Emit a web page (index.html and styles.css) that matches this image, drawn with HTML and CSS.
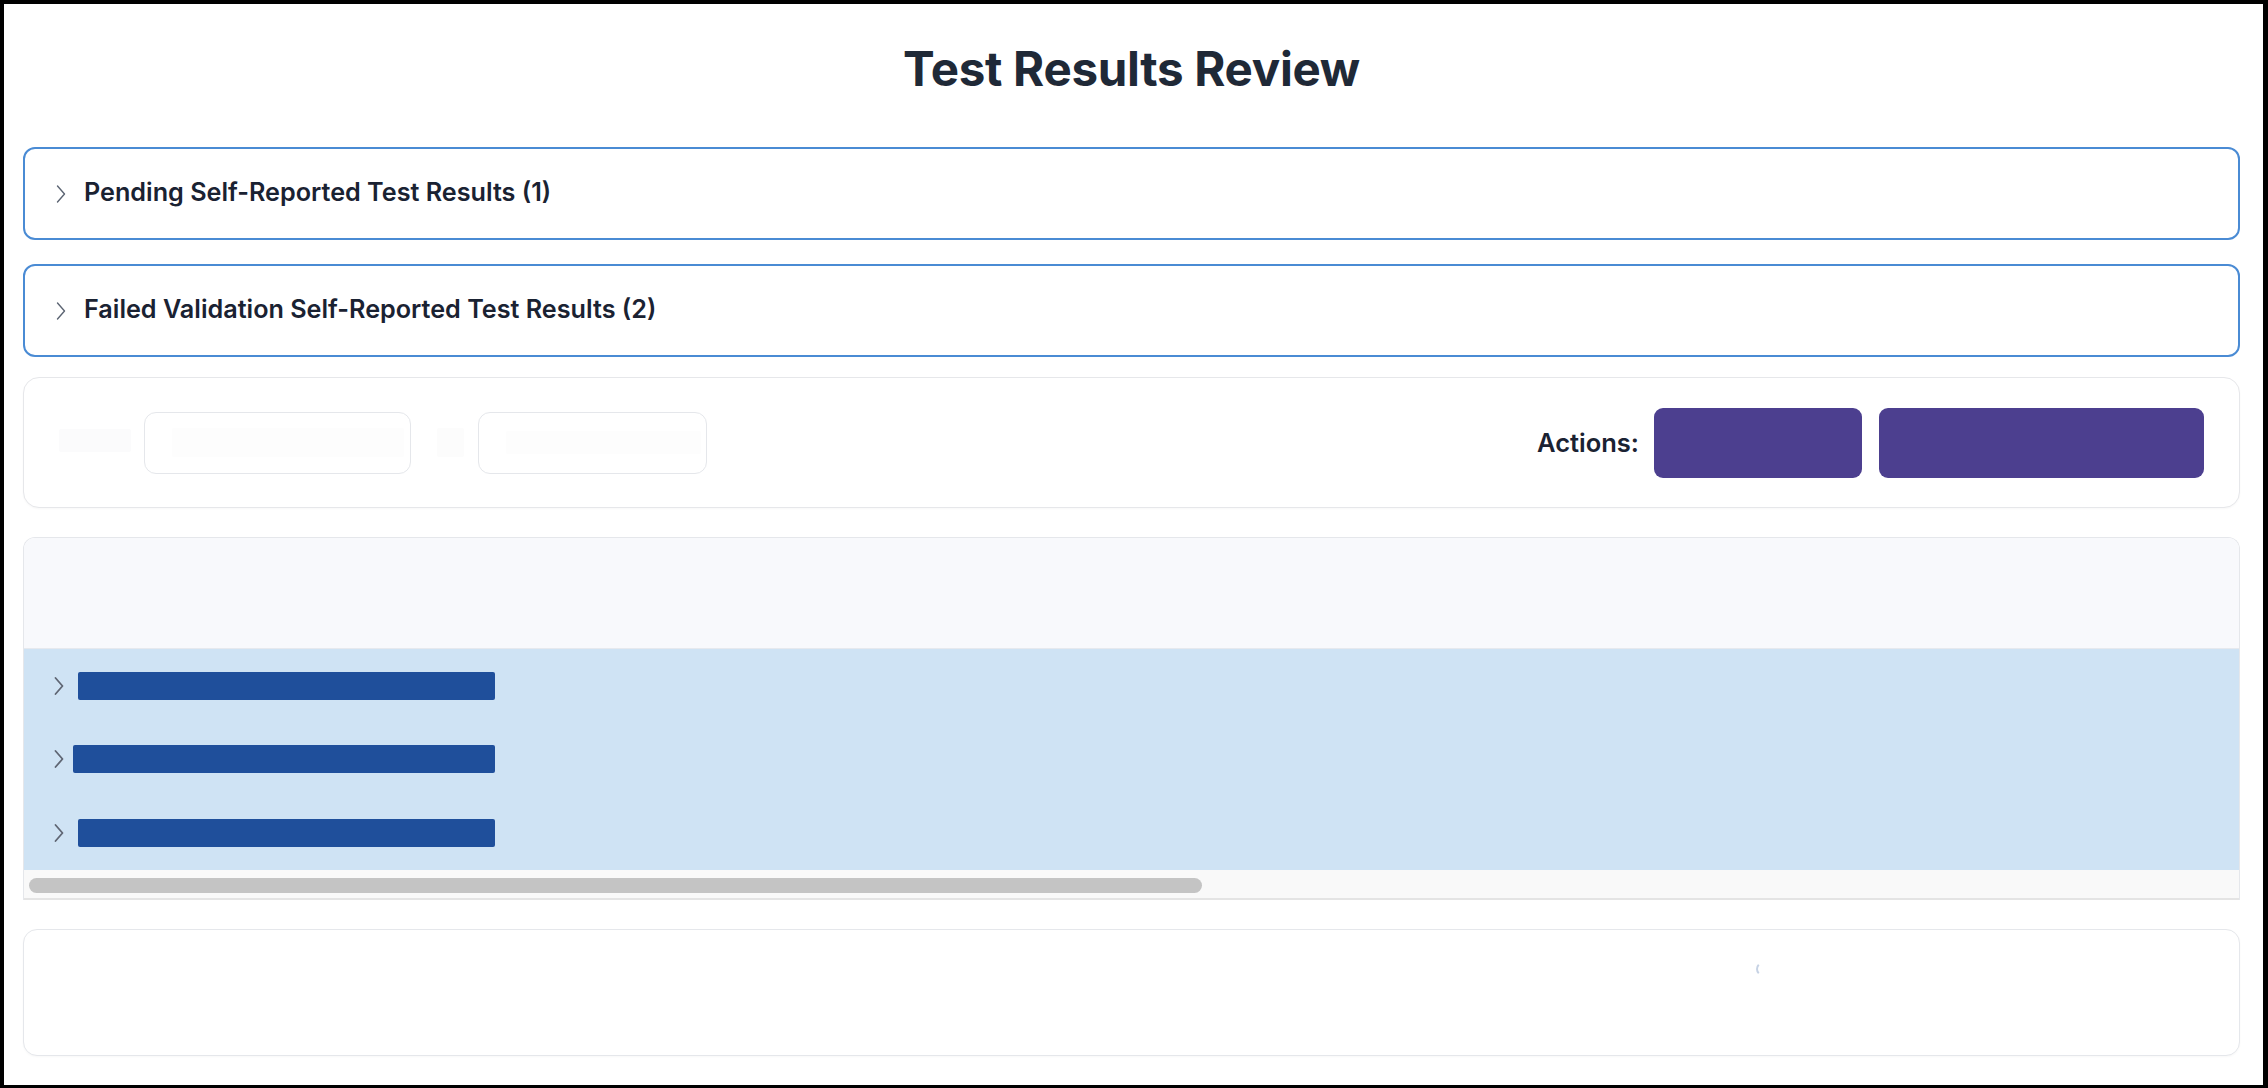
FILE: index.html
```html
<!DOCTYPE html>
<html lang="en">
<head>
<meta charset="utf-8">
<title>Test Results Review</title>
<link rel="stylesheet" href="styles.css">
</head>
<body>
<div class="frame">
  <main class="page">
    <h1 class="title">Test Results Review</h1>

    <section class="accordion">
      <button class="acc-head" type="button">
        <svg class="acc-chevron" width="12" height="20" viewBox="0 0 12 20" aria-hidden="true"><polyline points="2.5,2 9.5,10 2.5,18" fill="none" stroke="#5b6472" stroke-width="1.4" stroke-linecap="round" stroke-linejoin="round"/></svg>
        <span class="acc-title">Pending Self-Reported Test Results (1)</span>
      </button>
    </section>

    <section class="accordion accordion-second">
      <button class="acc-head" type="button">
        <svg class="acc-chevron" width="12" height="20" viewBox="0 0 12 20" aria-hidden="true"><polyline points="2.5,2 9.5,10 2.5,18" fill="none" stroke="#5b6472" stroke-width="1.4" stroke-linecap="round" stroke-linejoin="round"/></svg>
        <span class="acc-title">Failed Validation Self-Reported Test Results (2)</span>
      </button>
    </section>

    <section class="toolbar">
      <div class="filters">
        <span class="ghost ghost-label"></span>
        <div class="input input-wide"><span class="ghost ghost-text"></span></div>
        <span class="ghost ghost-sep"></span>
        <div class="input input-narrow"><span class="ghost ghost-text ghost-text-short"></span></div>
      </div>
      <div class="actions">
        <span class="actions-label">Actions:</span>
        <button class="btn btn-first" type="button"></button>
        <button class="btn btn-second" type="button"></button>
      </div>
    </section>

    <section class="table-card">
      <div class="thead"></div>
      <div class="tbody">
        <div class="row">
          <svg class="row-chevron" width="12" height="20" viewBox="0 0 12 20" aria-hidden="true"><polyline points="2.5,2 9.5,10 2.5,18" fill="none" stroke="#5f6673" stroke-width="1.8" stroke-linecap="round" stroke-linejoin="round"/></svg>
          <span class="bar"></span>
        </div>
        <div class="row">
          <svg class="row-chevron" width="12" height="20" viewBox="0 0 12 20" aria-hidden="true"><polyline points="2.5,2 9.5,10 2.5,18" fill="none" stroke="#5f6673" stroke-width="1.8" stroke-linecap="round" stroke-linejoin="round"/></svg>
          <span class="bar bar-wide"></span>
        </div>
        <div class="row">
          <svg class="row-chevron" width="12" height="20" viewBox="0 0 12 20" aria-hidden="true"><polyline points="2.5,2 9.5,10 2.5,18" fill="none" stroke="#5f6673" stroke-width="1.8" stroke-linecap="round" stroke-linejoin="round"/></svg>
          <span class="bar"></span>
        </div>
      </div>
      <div class="hscroll"><div class="thumb"></div></div>
    </section>

    <section class="footer-card">
      <span class="spinner"></span>
    </section>
  </main>
</div>
</body>
</html>
```

FILE: styles.css
```css
* { box-sizing: border-box; }

html, body {
  margin: 0;
  padding: 0;
  background: #000;
}

body {
  font-family: Inter, "Noto Sans", "Liberation Sans", sans-serif;
  color: #1f2937;
}

.frame {
  height: 100vh;
  border-style: solid;
  border-color: #000;
  border-width: 4px 5px 3px 4px;
  background: #fff;
  overflow: hidden;
}

.page {
  padding: 0 23px 0 19px;
}

.title {
  margin: 36px 0 0;
  font-size: 47.5px;
  line-height: 58px;
  font-weight: 700;
  text-align: center;
  color: #1f2937;
  letter-spacing: -0.3px;
}

.accordion {
  margin-top: 49px;
  height: 93px;
  border: 2px solid #4a8bd4;
  border-radius: 12px;
  background: #fff;
}

.accordion-second {
  margin-top: 24px;
}

.acc-head {
  display: flex;
  align-items: center;
  gap: 17px;
  width: 100%;
  height: 100%;
  padding: 0 0 3px 30px;
  border: 0;
  background: transparent;
  font: inherit;
  cursor: pointer;
}

.acc-chevron { flex: none; margin-top: 3px; }

.acc-title {
  font-size: 25.2px;
  font-weight: 600;
  color: #1a2232;
}

.toolbar {
  margin-top: 20px;
  height: 131px;
  border: 1px solid #e6e7ea;
  border-radius: 16px;
  background: #fff;
  box-shadow: 0 1px 2px rgba(0, 0, 0, 0.03);
  display: flex;
  align-items: center;
  justify-content: space-between;
  padding: 0 35px 0 35px;
}

.filters {
  display: flex;
  align-items: center;
}

.ghost {
  display: block;
  background: #fbfbfc;
  border-radius: 2px;
}

.ghost-label {
  width: 72px;
  height: 23px;
  margin-right: 13px;
  margin-top: -4px;
}

.input {
  height: 62px;
  border: 1px solid #e5e7eb;
  border-radius: 12px;
  background: #fff;
  display: flex;
  align-items: center;
  padding-left: 27px;
}

.input-wide { width: 267px; }
.input-narrow { width: 229px; }

.ghost-text {
  width: 232px;
  height: 29px;
  background: #fdfdfd;
}

.ghost-text-short {
  width: 195px;
  height: 23px;
}

.ghost-sep {
  width: 27px;
  height: 29px;
  margin: 0 14px 0 26px;
  background: #fcfcfc;
}

.actions {
  display: flex;
  align-items: center;
}

.actions-label {
  font-size: 25.5px;
  font-weight: 600;
  color: #1a2232;
  margin-right: 15px;
}

.btn {
  height: 70px;
  border: 0;
  border-radius: 9px;
  background: #4c3f8f;
  cursor: pointer;
}

.btn-first { width: 208px; margin-right: 17px; }
.btn-second { width: 325px; }

.table-card {
  margin-top: 29px;
  border: 1px solid #e5e7eb;
  border-bottom: 0;
  border-radius: 12px 12px 0 0;
  overflow: hidden;
  background: #fff;
}

.thead {
  height: 111px;
  background: #f8f9fc;
  border-bottom: 1px solid #e6e9ee;
}

.tbody {
  background: #cfe3f4;
}

.row {
  height: 74px;
  display: flex;
  align-items: center;
  padding-left: 29px;
}

.row:first-child { height: 73px; }

.row-chevron { flex: none; }

.bar {
  display: block;
  width: 417px;
  height: 28px;
  margin-left: 13px;
  background: #1f4f9b;
  border-radius: 2px;
}

.bar-wide {
  width: 422px;
  margin-left: 8px;
}

.hscroll {
  height: 30px;
  background: #f9f9f9;
  border-bottom: 2px solid #e4e4e4;
  padding: 8px 0 0 5px;
}

.thumb {
  width: 1173px;
  height: 15px;
  border-radius: 8px;
  background: #c4c4c4;
}

.footer-card {
  margin-top: 29px;
  height: 127px;
  border: 1px solid #e5e7eb;
  border-radius: 14px;
  background: #fff;
  box-shadow: 0 1px 2px rgba(0, 0, 0, 0.03);
  padding: 32px 0 0 1732px;
}

.spinner {
  display: block;
  width: 14px;
  height: 14px;
  border-radius: 50%;
  border: 2px solid transparent;
  border-left-color: #c6d2e4;
}
```
